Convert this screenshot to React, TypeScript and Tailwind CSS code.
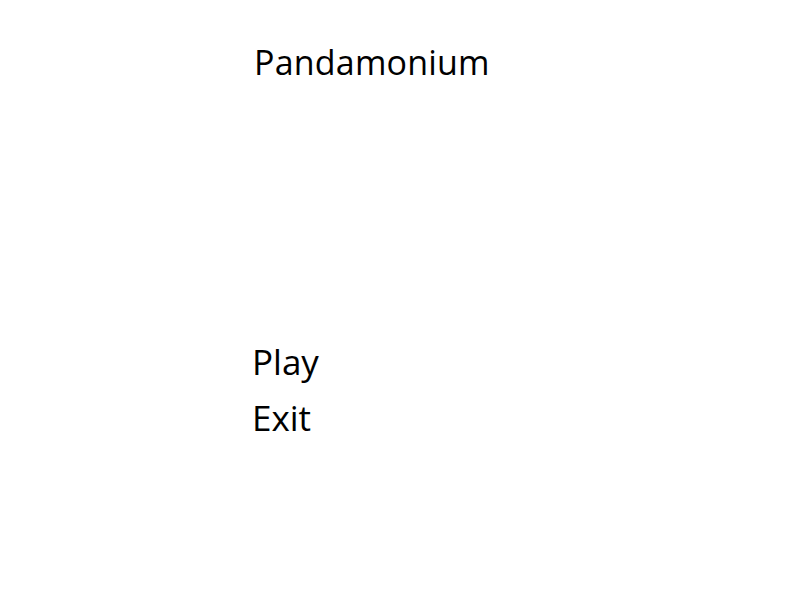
export default function App() {
    return (
        <div className="flex h-[600px] w-[800px] flex-col bg-white pl-[252px] text-black" style={{ fontFamily: '"Open Sans", sans-serif' }}>
            <h1 className="mt-[38px] ml-[2px] text-[34px] leading-[48px] font-normal tracking-[0.2px]">Pandamonium</h1>
            <div className="mt-[252px] flex flex-col gap-[8px]">
                <button className="text-left text-[35px] leading-[48px]">Play</button>
                <button className="text-left text-[35px] leading-[48px]">Exit</button>
            </div>
        </div>
    );
}
